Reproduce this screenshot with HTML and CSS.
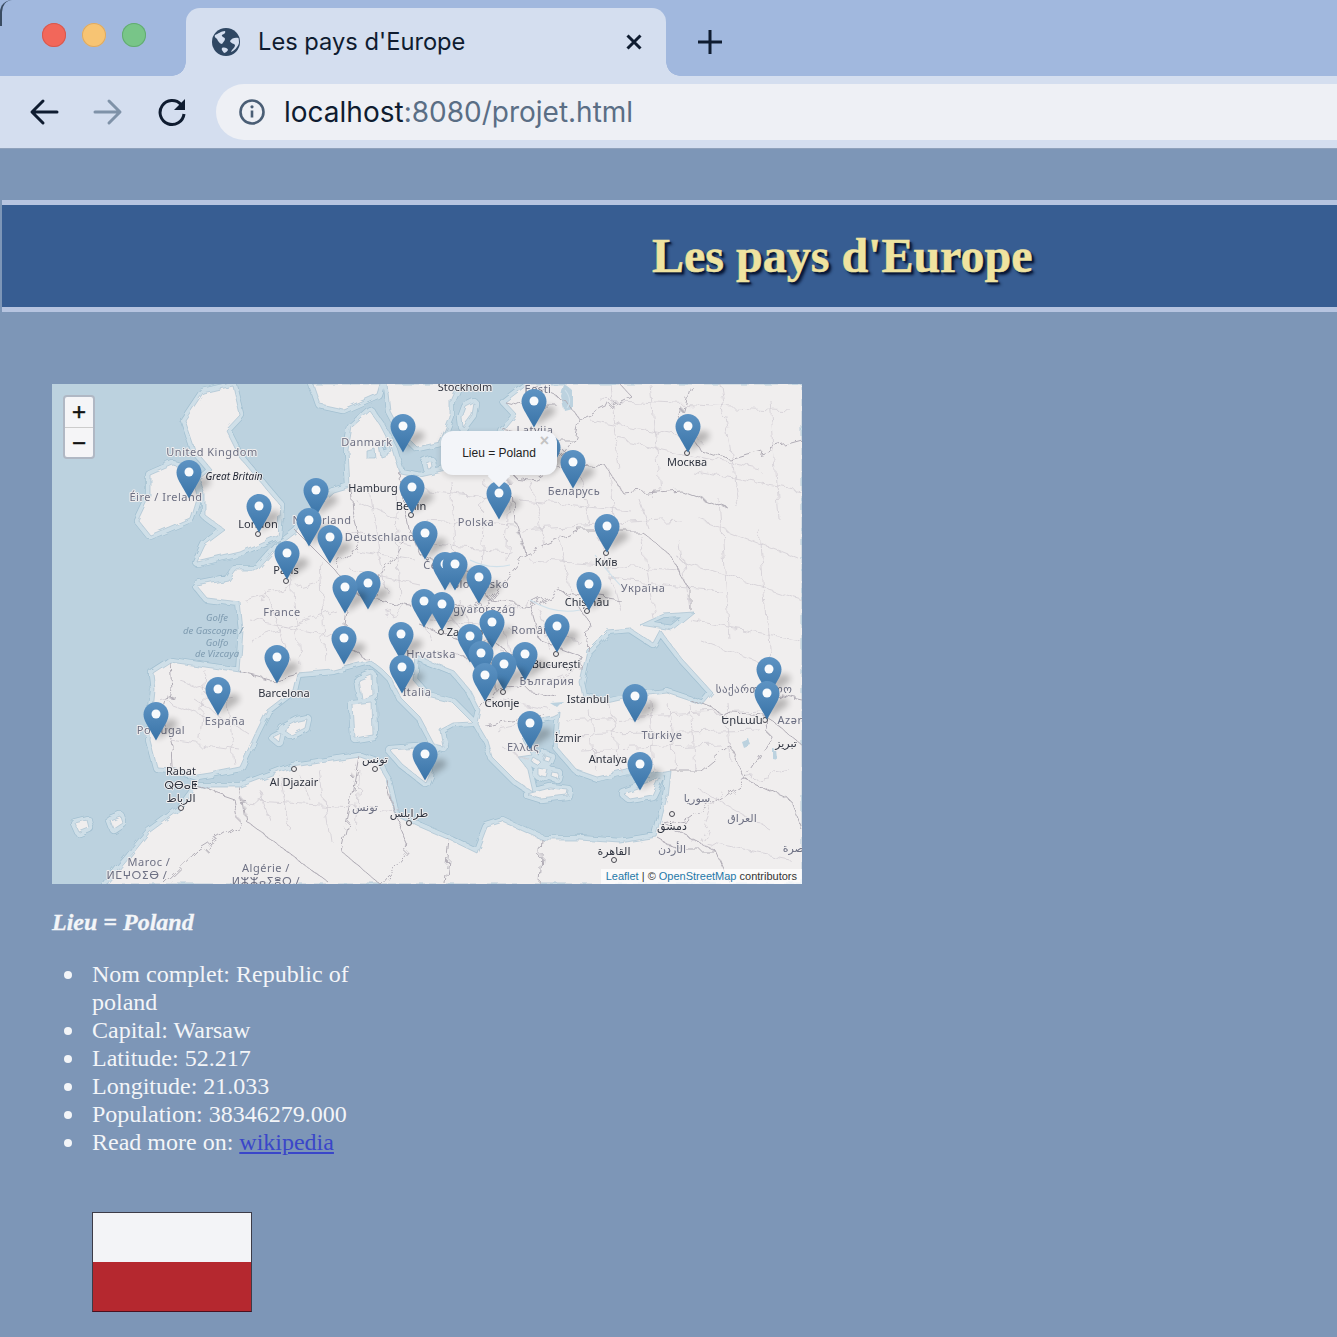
FILE: index.html
```html
<!DOCTYPE html>
<html lang="fr">
<head>
<meta charset="utf-8">
<title>Les pays d'Europe</title>
<link rel="stylesheet" href="styles.css">
</head>
<body>
<div class="chrome">
  <div class="tabbar">
    <div class="lights"><i class="light red"></i><i class="light yellow"></i><i class="light green"></i></div>
    <div class="tab">
      <svg class="globe" width="28" height="28" viewBox="0 0 28 28"><circle cx="14" cy="14" r="14" fill="#2f4763"/><path d="M3 7c3-1 6-4 10-4 1 2-1 3-3 4-1 2 3 2 3 4s-2 3-3 5c-2 0-4-3-5-5-1-1-3-2-2-4zM26.500 10c-3-1-7 0-8.500 3 1 3 4 2 5 4 0 3-3 4-4 7 3-1 7-5 8-9 0-1 0-3-.5-5zM10 20c2-1 6 0 6 2-1 2-3 3-4 3-1-2-3-3-2-5z" fill="#d4deef"/></svg>
      <span class="tab-title">Les pays d'Europe</span>
      <svg class="tab-close" width="18" height="18" viewBox="0 0 18 18"><path d="M2.500 2.500l13 13M15.500 2.500l-13 13" stroke="#0f1c30" stroke-width="3" fill="none"/></svg>
    </div>
    <svg class="new-tab" width="26" height="26" viewBox="0 0 26 26"><path d="M13 1v24M1 13h24" stroke="#0f1c30" stroke-width="3" fill="none"/></svg>
  </div>
  <div class="toolbar">
    <svg class="nav" width="30" height="30" viewBox="0 0 30 30"><path d="M28 15H4M14 4L3 15l11 11" stroke="#0f1c30" stroke-width="3" stroke-linecap="round" stroke-linejoin="round" fill="none"/></svg>
    <svg class="nav" width="30" height="30" viewBox="0 0 30 30"><path d="M2 15h24M16 4l11 11-11 11" stroke="#7f92a8" stroke-width="3" stroke-linecap="round" stroke-linejoin="round" fill="none"/></svg>
    <svg class="nav" width="30" height="30" viewBox="0 0 30 30"><path d="M24 7.500A12 12 0 1 0 27 17" stroke="#0f1c30" stroke-width="3" fill="none"/><path d="M28 2v11H17z" fill="#0f1c30"/></svg>
    <div class="omnibox">
      <svg width="28" height="28" viewBox="0 0 28 28"><circle cx="14" cy="14" r="11.500" fill="none" stroke="#4a5e75" stroke-width="2.600"/><path d="M14 12.500v7" stroke="#4a5e75" stroke-width="2.600"/><circle cx="14" cy="8.800" r="1.600" fill="#4a5e75"/></svg>
      <span class="url"><span class="host">localhost</span>:8080/projet.html</span>
    </div>
  </div>
</div>

<div class="page">
  <header class="banner"><h1>Les pays d'Europe</h1></header>
  <main class="content">
    <div class="map">
      <svg class="tiles" width="750" height="500" viewBox="52 384 750 500" xmlns="http://www.w3.org/2000/svg">
        <defs>
          <linearGradient id="pg" x1="0" y1="0" x2="0" y2="1"><stop offset="0" stop-color="#5d93c3"/><stop offset="1" stop-color="#3a74a8"/></linearGradient>
          <filter id="wig" x="-5%" y="-5%" width="110%" height="110%"><feTurbulence type="fractalNoise" baseFrequency="0.07" numOctaves="3" seed="4"/><feDisplacementMap in="SourceGraphic" scale="14"/></filter>
          <filter id="wig2" x="-5%" y="-5%" width="110%" height="110%"><feTurbulence type="fractalNoise" baseFrequency="0.08" numOctaves="2" seed="9"/><feDisplacementMap in="SourceGraphic" scale="6"/></filter>
          <filter id="sb" x="-60%" y="-60%" width="220%" height="220%"><feGaussianBlur stdDeviation="3"/></filter>
          <symbol id="pin" width="50" height="42" viewBox="0 0 50 42" overflow="visible">
            <path d="M13 38L31 26c6-4 2-10-5-9-5 1-8 4-10 9z" fill="#000" opacity=".24" filter="url(#sb)"/>
            <path d="M12.500 0C5.600 0 0 5.600 0 12.500c0 3 1 5.700 2.600 8.700L12.500 38.500l9.900-17.300c1.600-3 2.600-5.700 2.600-8.700C25 5.600 19.400 0 12.500 0z" fill="url(#pg)"/>
            <circle cx="12.500" cy="12" r="4.500" fill="#f8fafc"/>
          </symbol>
          <path id="land" fill-rule="evenodd" d="M197 775L173 768 157 767 150 740 155 690 153 673 170 662 205 667 240 672 243 630 240 602 207 598 197 586 228 580 235 570 258 570 280 545 297 532 313 510 333 492 350 487 348 450 352 427 370 411 380 425 393 450 400 473 420 477 447 471 470 473 490 468 497 452 503 432 517 415 505 402 527 385 530 384 802 384 802 884 107 884 130 857 150 832 180 810 197 787 240 787 293 767 360 757 377 763 387 780 395 815 420 827 450 840 477 853 487 827 503 822 543 840 580 840 620 843 657 837 667 797 670 770 653 773 627 770 597 777 577 770 557 747 560 712 552 716 530 720 522 738 532 755 518 757 528 770 533 792 515 780 492 757 487 740 477 723 480 710 470 690 453 670 420 657 415 655 413 680 428 697 453 703 472 722 453 723 440 730 443 747 435 745 420 717 400 697 390 677 383 670 370 660 333 670 297 673 293 690 267 710 257 730 240 767 210 773z
            M580 683L587 650 607 630 630 628 653 643 660 630 683 660 713 693 703 705 667 693 633 697 607 703 583 697z
            M640 625L664 614 694 612 672 630z
            M203 393L233 386 240 415 226 430 240 458 257 478 280 505 277 535 240 552 197 562 205 545 225 530 205 515 205 495 200 480 212 470 195 450 185 420z
            M173 465L190 470 197 495 190 518 150 535 138 520 150 495 150 475z
            M313 384L320 404 343 409 377 394 380 384z
            M387 384L390 411 400 430 417 447 440 442 450 417 450 400 457 384z
            M378 445L388 440 392 452 380 456z M366 450L374 448 375 458 366 458z
            M466 407L474 403 472 415 463 427 462 418z M426 463L431 461 432 467 427 468z
            M390 750L433 747 428 775 425 782 403 765z
            M353 705L372 703 373 735 355 738z
            M359 680L372 675 373 695 362 699z
            M283 729L298 721 307 719 305 728 291 735z
            M273 737L281 733 279 742z
            M527 794L550 788 568 790 567 795 540 798z
            M623 793L640 787 660 778 652 795 630 799z
            M538 768L548 770 546 777 538 775z M545 755l6 2-2 5-6-2z M552 772l6 1-1 5-6-2z M533 757l8 5-3 3-7-4z
            M110 820l10-4 2 6-9 6z M75 823l12-3 2 8-10 4z"/>
        </defs>
        <rect x="52" y="384" width="750" height="500" fill="#bcd2df"/>
        <g filter="url(#wig2)" stroke-linejoin="round">
          <use href="#land" fill="#a3c0d1" stroke="#a3c0d1" stroke-width="10"/>
          <use href="#land" fill="#cfdfe8" stroke="#cfdfe8" stroke-width="8.500"/>
          <use href="#land" fill="#f0eeee" stroke="#a9c2d1" stroke-width=".7"/>
        </g>
        <g fill="#bcd2df" filter="url(#wig2)">
          <path d="M564 384l8 6 0 18-8 2-3-14zM741 741l7-3 2 6-7 3zM772 748l4 1 1 10-5-1zM550 703l14-1-6 6z"/>
        </g>
        <g fill="none" stroke="#d2ced4" stroke-width=".8" filter="url(#wig)">
          <path d="M180 680L235 700M195 700L250 735M205 670L200 740M225 680L235 765M160 700L215 720M170 740L240 750"/>
          <path d="M245 600L320 580M250 640L335 610M290 560L300 665M265 590L290 660M320 560L325 660M250 620L345 640"/>
          <path d="M355 500L400 520M345 530L410 545M370 490L385 590M350 570L420 585M395 490L400 600M355 550L415 560"/>
          <path d="M420 490L505 500M425 520L515 525M450 480L455 560M485 480L480 590M430 545L510 550M510 490L505 560"/>
          <path d="M520 500L630 510M530 480L545 550M580 470L590 525M640 500L650 530M520 530L680 520M610 470L615 530"/>
          <path d="M530 560L680 570M560 535L570 590M600 540L620 610M640 535L655 620M610 580L720 590M680 540L690 610"/>
          <path d="M600 400L790 410M620 440L760 470M650 384L660 490M720 384L740 510M770 400L780 520M590 420L700 440M610 384L620 470M690 470L800 490"/>
          <path d="M700 520L800 560M680 560L802 600M720 500L730 640M760 530L770 660M690 620L800 640M700 640L780 670"/>
          <path d="M565 720L760 710M580 750L720 745M610 700L620 770M650 700L655 770M690 705L695 770M725 700L730 760M570 735L760 730M590 710L595 770M670 705L675 770"/>
          <path d="M240 800L400 810M280 775L290 830M320 770L330 840M360 770L355 830M260 790L270 820M300 775L310 800"/>
          <path d="M510 630L580 640M500 650L540 660M480 620L530 600M540 610L550 650M500 610L510 660M550 680L575 670"/>
          <path d="M430 620L490 625M445 610L470 640M415 600L430 640M385 615L420 605M460 600L470 625"/>
          <path d="M500 700L550 710M495 730L540 720M505 750L530 760"/>
          <path d="M740 780L790 770M700 790L770 830M690 840L790 860M720 790L700 840"/>
        </g>
        <g fill="none" stroke="#b1adb6" stroke-width="1" filter="url(#wig)">
          <path d="M170 662L172 690 165 720 172 745 173 768"/>
          <path d="M240 672L270 680 297 673"/>
          <path d="M297 532L315 550 335 570 350 590 345 625 350 650 370 660"/>
          <path d="M335 570L360 540 352 510 350 487"/>
          <path d="M350 590L375 600 400 605 420 610 445 605 470 610 490 600 530 605 560 590 590 595 620 600"/>
          <path d="M400 473L405 505 410 530 420 555 450 565 475 575 490 600"/>
          <path d="M410 530L395 555 380 575 375 600"/>
          <path d="M490 468L510 475 535 478 560 460 605 465 625 495 680 490 730 510"/>
          <path d="M510 475L515 520 525 555 490 600"/>
          <path d="M525 555L580 530 640 530 670 555 690 590 690 610"/>
          <path d="M560 460L575 440 580 420 565 400 530 384"/>
          <path d="M505 402L530 408 560 408M505 432L540 440 575 440"/>
          <path d="M580 420L630 395 620 384"/>
          <path d="M690 384L680 420 700 450 730 460 802 440"/>
          <path d="M560 590L575 600 590 625 587 650"/>
          <path d="M530 605L540 640 580 655 583 668"/>
          <path d="M490 640L530 665 583 668"/>
          <path d="M420 625L460 640 490 640 495 665 495 690 480 710"/>
          <path d="M428 658L450 650 480 665 495 665"/>
          <path d="M495 690L520 688 555 695"/>
          <path d="M485 725L510 720 545 715"/>
          <path d="M670 770L700 770 730 745 745 780 690 820 665 825"/>
          <path d="M745 780L770 740 765 715 720 712 690 700"/>
          <path d="M745 780L790 800 802 830"/>
          <path d="M665 825L715 850 730 884"/>
          <path d="M657 837L680 850 715 850"/>
          <path d="M543 840L540 884M450 840L445 884"/>
          <path d="M387 780L395 815 410 850 380 884"/>
          <path d="M197 787L235 800 240 825 200 850 165 884"/>
          <path d="M240 787L245 820 330 884"/>
          <path d="M360 757L352 800 340 850 380 884"/>
          <path d="M755 690L802 700M765 715L802 745"/>
        </g>
        <g fill="none" stroke="#cfe0ea" stroke-width="1.200">
          <path d="M565 390q8 10 2 18M470 560q20 10 40 5M530 600q25 15 50 10M595 555q15 20 30 35"/>
        </g>
        <g class="dots">
          <circle cx="258" cy="534" r="2.500"/><circle cx="286" cy="581" r="2.500"/><circle cx="411" cy="515" r="2.500"/><circle cx="687" cy="453" r="2.500"/><circle cx="606" cy="553" r="2.500"/><circle cx="587" cy="611" r="2.500"/><circle cx="441" cy="632" r="2.500"/><circle cx="503" cy="692" r="2.500"/><circle cx="556" cy="654" r="2.500"/><circle cx="181" cy="808" r="2.500"/><circle cx="294" cy="769" r="2.500"/><circle cx="375" cy="769" r="2.500"/><circle cx="409" cy="823" r="2.500"/><circle cx="672" cy="814" r="2.500"/><circle cx="614" cy="860" r="2.500"/><circle cx="765" cy="720" r="2.500"/>
        </g>
        <g class="country">
          <text x="212" y="456">United Kingdom</text><text x="166" y="501">Éire / Ireland</text><text x="367" y="446">Danmark</text><text x="322" y="524">Nederland</text><text x="380" y="541">Deutschland</text><text x="476" y="526">Polska</text><text x="574" y="495">Беларусь</text><text x="643" y="592">Україна</text><text x="282" y="616">France</text><text x="440" y="569">Česko</text><text x="481" y="588">Slovensko</text><text x="476" y="613">Magyarország</text><text x="536" y="634">România</text><text x="431" y="658">Hrvatska</text><text x="547" y="685">България</text><text x="417" y="696">Italia</text><text x="225" y="725">España</text><text x="161" y="734">Portugal</text><text x="523" y="751">Ελλάς</text><text x="662" y="739">Türkiye</text><text x="538" y="393">Eesti</text><text x="535" y="434">Latvija</text><text x="149" y="866">Maroc /</text><text x="266" y="872">Algérie /</text><text x="137" y="879">ⵍⵎⵖⵔⵉⴱ /</text><text x="266" y="885">ⵍⵣⵣⴰⵢⴻⵔ /</text><text x="697" y="802">سوريا</text><text x="742" y="822">العراق</text><text x="672" y="853">الأردن</text><text x="795" y="852">بصرة</text><text x="365" y="811">تونس</text><text x="790" y="724">Azər</text><text x="754" y="693">საქართველო</text>
        </g>
        <g class="city">
          <text x="465" y="391">Stockholm</text><text x="373" y="492">Hamburg</text><text x="411" y="510">Berlin</text><text x="258" y="528">London</text><text x="286" y="574">Paris</text><text x="687" y="466">Москва</text><text x="606" y="566">Київ</text><text x="587" y="606">Chișinău</text><text x="465" y="636">Zagreb</text><text x="556" y="668">București</text><text x="502" y="707">Скопје</text><text x="284" y="697">Barcelona</text><text x="181" y="775">Rabat</text><text x="181" y="789">ⵕⴱⴰⵟ</text><text x="181" y="802">الرباط</text><text x="294" y="786">Al Djazair</text><text x="375" y="763">تونس</text><text x="409" y="817">طرابلس</text><text x="588" y="703">Istanbul</text><text x="568" y="742">İzmir</text><text x="608" y="763">Antalya</text><text x="742" y="724">Երևան</text><text x="786" y="747">تبريز</text><text x="672" y="830">دمشق</text><text x="614" y="855">القاهرة</text>
        </g>
        <g class="sea"><text x="217" y="621">Golfe</text><text x="213" y="634">de Gascogne /</text><text x="217" y="646">Golfo</text><text x="217" y="657">de Vizcaya</text></g>
        <text class="gb" x="234" y="480">Great Britain</text>
        <g>
          <use href="#pin" x="521.500" y="389"/><use href="#pin" x="675.500" y="414"/><use href="#pin" x="390.500" y="414"/><use href="#pin" x="535.500" y="435"/><use href="#pin" x="560.500" y="450"/><use href="#pin" x="176.500" y="460"/><use href="#pin" x="303.500" y="478"/><use href="#pin" x="399.500" y="475"/><use href="#pin" x="486.500" y="481"/><use href="#pin" x="246.500" y="494"/><use href="#pin" x="296.500" y="508"/><use href="#pin" x="594.500" y="514"/><use href="#pin" x="317.500" y="525"/><use href="#pin" x="412.500" y="521"/><use href="#pin" x="274.500" y="541"/><use href="#pin" x="432.500" y="552"/><use href="#pin" x="442.500" y="552"/><use href="#pin" x="466.500" y="565"/><use href="#pin" x="355.500" y="571"/><use href="#pin" x="332.500" y="575"/><use href="#pin" x="576.500" y="572"/><use href="#pin" x="411.500" y="589"/><use href="#pin" x="429.500" y="592"/><use href="#pin" x="479.500" y="610"/><use href="#pin" x="544.500" y="614"/><use href="#pin" x="457.500" y="624"/><use href="#pin" x="388.500" y="622"/><use href="#pin" x="331.500" y="626"/><use href="#pin" x="468.500" y="641"/><use href="#pin" x="264.500" y="645"/><use href="#pin" x="512.500" y="642"/><use href="#pin" x="491.500" y="652"/><use href="#pin" x="389.500" y="655"/><use href="#pin" x="756.500" y="657"/><use href="#pin" x="472.500" y="663"/><use href="#pin" x="205.500" y="677"/><use href="#pin" x="754.500" y="681"/><use href="#pin" x="622.500" y="684"/><use href="#pin" x="143.500" y="702"/><use href="#pin" x="517.500" y="711"/><use href="#pin" x="412.500" y="742"/><use href="#pin" x="627.500" y="752"/>
        </g>
      </svg>
      <div class="zoom"><span class="zoom-btn">+</span><span class="zoom-btn">−</span></div>
      <div class="popup"><span class="popup-x">×</span>Lieu = Poland</div>
      <div class="attrib"><a class="alink">Leaflet</a> | © <a class="alink">OpenStreetMap</a> contributors</div>
    </div>
    <h3 class="place">Lieu = Poland</h3>
    <ul class="facts">
      <li>Nom complet: Republic of poland</li>
      <li>Capital: Warsaw</li>
      <li>Latitude: 52.217</li>
      <li>Longitude: 21.033</li>
      <li>Population: 38346279.000</li>
      <li>Read more on: <a class="wiki" href="#">wikipedia</a></li>
    </ul>
    <div class="flag"><div class="flag-white"></div><div class="flag-red"></div></div>
  </main>
</div>
</body>
</html>
```
FILE: styles.css
```css
* { box-sizing: border-box; }
html, body { margin: 0; padding: 0; height: 1337px; overflow: hidden; background: #7d96b7; }
.chrome { height: 148px; display: flex; flex-direction: column; font-family: "Inter", "Roboto", sans-serif; }
.tabbar { height: 76px; background: #a1b8de; display: flex; align-items: flex-end; position: relative; }
.tabbar::before { content: ""; position: absolute; left: 0; top: 0; width: 10px; height: 26px; border-left: 2px solid #3a4c62; border-top-left-radius: 12px; }
.lights { width: 186px; height: 68px; display: flex; gap: 15px; padding: 15px 0 0 42px; }
.light { width: 24px; height: 24px; border-radius: 50%; display: block; margin-right: 1px; }
.red { background: #f2675a; box-shadow: inset 0 0 0 1px #d65a50; }
.yellow { background: #f7c473; box-shadow: inset 0 0 0 1px #dba965; }
.green { background: #78c588; box-shadow: inset 0 0 0 1px #62ab73; }
.tab { width: 480px; height: 68px; background: #d4deef; border-radius: 14px 14px 0 0; display: flex; align-items: center; padding: 0 23px 0 26px; position: relative; }
.tab::before, .tab::after { content: ""; position: absolute; bottom: 0; width: 14px; height: 14px; }
.tab::before { left: -14px; background: radial-gradient(circle at 0 0, transparent 13.5px, #d4deef 14px); }
.tab::after { right: -14px; background: radial-gradient(circle at 100% 0, transparent 13.5px, #d4deef 14px); }
.globe { flex: none; }
.tab-title { font-size: 23.700px; color: #0f1c30; margin: -2px 0 0 18px; flex: 1; white-space: nowrap; }
.tab-close { flex: none; }
.new-tab { margin: 0 0 21px 31px; }
.toolbar { height: 72px; background: #d4deef; display: flex; align-items: center; padding: 0 0 0 29px; gap: 34px; }
.nav { flex: none; }
.omnibox { flex: 1; height: 56px; margin-left: -5px; background: #eef0f5; border-radius: 28px 0 0 28px; display: flex; align-items: center; padding-left: 22px; gap: 18px; }
.url { font-size: 28px; color: #5a6e85; white-space: nowrap; }
.host { color: #0f1c30; }

.page { height: 1189px; background: #7d96b7; border-top: 1px solid #8fa1bb; padding: 51px 0 0 2px; font-family: "Liberation Serif", serif; color: #f3f5f8; }
.banner { height: 112px; background: #375d92; border-top: 5px solid #b6c4e0; border-bottom: 5px solid #b6c4e0; display: flex; align-items: center; padding-left: 650px; }
.banner h1 { margin: 0; font-size: 48px; font-weight: bold; line-height: 1; color: #efe3a0; -webkit-text-stroke: .5px #efe3a0; text-shadow: 2px 2px 1px #0a1a3a, 3px 3px 3px #0a1a3a; white-space: nowrap; }
.content { padding: 72px 0 0 50px; }
.map { width: 750px; height: 500px; position: relative; overflow: hidden; }
.tiles { display: block; filter: blur(.3px); }
.country text, .city text, .sea text, .gb { font-family: "Noto Sans", "DejaVu Sans", sans-serif; text-anchor: middle; paint-order: stroke; stroke-linejoin: round; }
.country text { font-size: 11px; letter-spacing: .5px; fill: #6d7083; stroke: #f0eeee; stroke-width: 2px; }
.city text { font-size: 11px; fill: #2f3440; stroke: #f0eeee; stroke-width: 2px; }
.sea text { font-size: 9.500px; font-style: italic; fill: #7e9bb0; }
.gb { font-size: 10px; font-style: italic; fill: #1d2230; stroke: #f0eeee; stroke-width: 1.500px; }
.dots circle { fill: #f0eeee; stroke: #4a4a52; stroke-width: 1; }

.zoom { position: absolute; left: 11px; top: 11px; width: 32px; height: 64px; background: #f5f5f7; border: 2px solid #b0b8c4; border-radius: 4px; display: flex; flex-direction: column; font-family: "Liberation Sans", sans-serif; }
.zoom-btn { height: 30px; display: flex; align-items: center; justify-content: center; font-size: 24px; color: #111; -webkit-text-stroke: .5px #111; }
.zoom-btn + .zoom-btn { border-top: 1px solid #ccc; }
.popup { position: absolute; left: 389px; top: 47px; width: 116px; height: 44px; background: #f3f5f9; border-radius: 12px; font: 12px/44px "Liberation Sans", sans-serif; color: #222; text-align: center; box-shadow: 0 2px 6px rgba(0,0,0,.15); }
.popup::after { content: ""; position: absolute; left: 50px; top: 37px; width: 16px; height: 16px; background: #f3f5f9; transform: rotate(45deg); }
.popup-x { position: absolute; right: 8px; top: 0; font: bold 16px/20px "Liberation Sans", sans-serif; color: #c3c3c3; }
.attrib { position: absolute; right: 0; bottom: 0; height: 15px; padding: 0 5px; background: rgba(255,255,255,.72); font: 11px/15px "Liberation Sans", sans-serif; color: #333; white-space: nowrap; }
.alink { color: #1f78a8; }

.place { margin: 24px 0 24px; font-size: 24px; line-height: 28px; font-weight: bold; font-style: italic; color: #f3f5f8; -webkit-text-stroke: .3px #f3f5f8; }
.facts { margin: 0; padding: 0 0 0 40px; width: 310px; font-size: 24px; line-height: 28px; list-style: none; }
.facts li { position: relative; }
.facts li::before { content: ""; position: absolute; left: -28px; top: 11px; width: 8px; height: 8px; border-radius: 50%; background: #f3f5f8; }
.wiki { color: #3a46c9; }
.flag { margin: 56px 0 0 40px; width: 160px; height: 100px; border: 1px solid #3c3c48; border-bottom-color: #4a1020; display: flex; flex-direction: column; }
.flag-white { flex: 1; background: #f3f4f7; }
.flag-red { flex: 1; background: #b5282f; }
```
